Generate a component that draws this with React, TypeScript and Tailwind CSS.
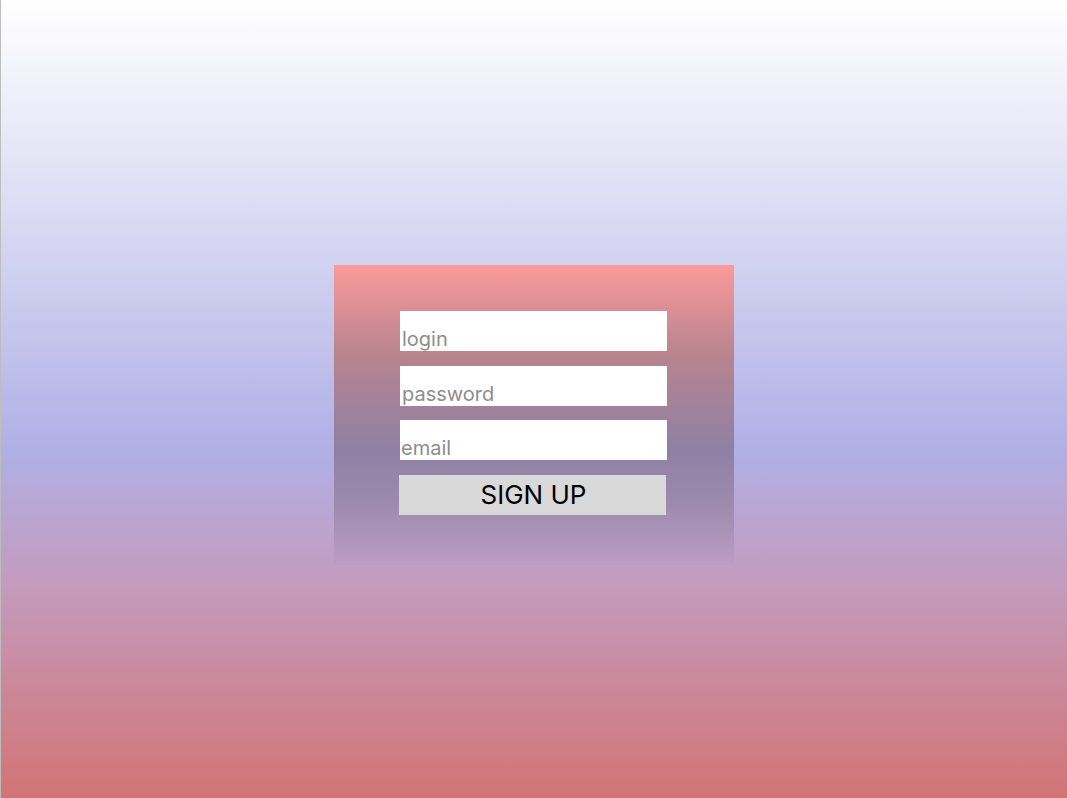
export default function App() {
  const font = { fontFamily: "Inter, 'Noto Sans', sans-serif" };
  return (
    <div
      className="w-[1067px] h-[798px] border-l border-[#bdbdbd] bg-[linear-gradient(180deg,#ffffff_0%,#d9d9f3_28%,#b0b0e6_56%,#c49abb_74%,#d27474_100%)] flex flex-col items-center pt-[265px]"
      style={font}
    >
      <div className="w-[400px] h-[300px] bg-[linear-gradient(180deg,#fc9a9a_0%,#b8848f_30%,#8e80a4_62%,#9d8bae_80%,#bc9cc3_100%)] flex flex-col pt-[46px] pl-[66px]">
        <div className="w-[267px] h-[40px] bg-white flex items-end pl-[2px] text-[20px] leading-[24px] text-[#8d8d8d]">
          login
        </div>
        <div className="w-[267px] h-[40px] mt-[15px] bg-white flex items-end pl-[2px] text-[20px] leading-[24px] text-[#8d8d8d]">
          password
        </div>
        <div className="w-[267px] h-[40px] mt-[14px] bg-white flex items-end pl-[1px] text-[20px] leading-[24px] text-[#8d8d8d]">
          email
        </div>
        <button className="w-[267px] h-[40px] mt-[15px] -ml-[1px] bg-[#d9d9d9] text-black text-[26px] leading-[30px] flex items-center justify-center pl-[2px]">
          SIGN UP
        </button>
      </div>
    </div>
  );
}
